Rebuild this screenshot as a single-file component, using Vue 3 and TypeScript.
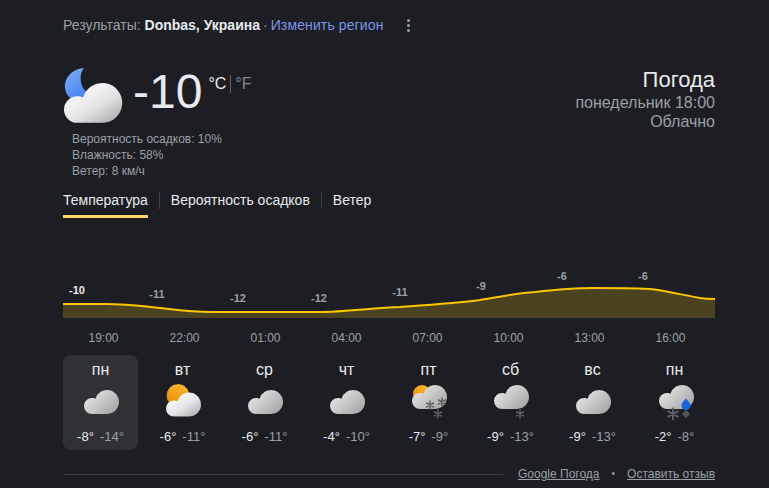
<script setup lang="ts">
type Kind = 'cloud' | 'sun' | 'sunsnow' | 'snow' | 'mix'
interface Day { name: string; hi: string; lo: string; kind: Kind }

const days: Day[] = [
  { name: 'пн', hi: '-8°', lo: '-14°', kind: 'cloud' },
  { name: 'вт', hi: '-6°', lo: '-11°', kind: 'sun' },
  { name: 'ср', hi: '-6°', lo: '-11°', kind: 'cloud' },
  { name: 'чт', hi: '-4°', lo: '-10°', kind: 'cloud' },
  { name: 'пт', hi: '-7°', lo: '-9°', kind: 'sunsnow' },
  { name: 'сб', hi: '-9°', lo: '-13°', kind: 'snow' },
  { name: 'вс', hi: '-9°', lo: '-13°', kind: 'cloud' },
  { name: 'пн', hi: '-2°', lo: '-8°', kind: 'mix' }
]
const hours = ['19:00', '22:00', '01:00', '04:00', '07:00', '10:00', '13:00', '16:00']
const labels = [
  { x: 14, y: 26, t: '-10', main: true },
  { x: 94, y: 30, t: '-11', main: false },
  { x: 175, y: 34, t: '-12', main: false },
  { x: 256, y: 34, t: '-12', main: false },
  { x: 337, y: 28, t: '-11', main: false },
  { x: 418, y: 22, t: '-9', main: false },
  { x: 499, y: 12, t: '-6', main: false },
  { x: 580, y: 12, t: '-6', main: false }
]
const curve = 'M0 36 C15 36 30 36 42 36 C62 36 78 38 97 40 C115 42 130 44 149 44 L257 44 C280 44 310 40 337 39 C365 37 395 35 417 32 C435 29 455 25 472 24 C490 22 510 20 530 20 C545 20 565 20 587 21 C605 23 620 27 637 30 C643 31 648 31 652 31'
const area = curve + ' L652 50 L0 50 Z'
</script>

<template>
  <div class="page">
    <svg class="defs" width="0" height="0" aria-hidden="true">
      <defs>
        <linearGradient id="cloudMain" x1="0.1" y1="0.1" x2="0.9" y2="1">
          <stop offset="0" stop-color="#ffffff" />
          <stop offset="0.55" stop-color="#e4e4e4" />
          <stop offset="1" stop-color="#a9a9a9" />
        </linearGradient>
        <linearGradient id="cloudGrey" x1="0.1" y1="0.3" x2="0.9" y2="0.9">
          <stop offset="0" stop-color="#e2e2e2" />
          <stop offset="1" stop-color="#a6a6a6" />
        </linearGradient>
        <linearGradient id="moonFill" x1="0.2" y1="0" x2="0.8" y2="1">
          <stop offset="0" stop-color="#7aa9f7" />
          <stop offset="1" stop-color="#3d7cf2" />
        </linearGradient>
        <linearGradient id="sunFill" x1="0.8" y1="0" x2="0.2" y2="1">
          <stop offset="0" stop-color="#fbb92d" />
          <stop offset="1" stop-color="#ee8a0a" />
        </linearGradient>
        <g id="flake" stroke="#5f6064" stroke-width="1.5" stroke-linecap="round">
          <path d="M0 -4V4M-3.5 -2L3.5 2M-3.5 2L3.5 -2" />
        </g>
      </defs>
    </svg>

    <header class="top">
      <span class="region">Результаты: <b>Donbas, Украина</b><span class="sep">·</span><a class="link">Изменить регион</a></span>
      <span class="dots"><i></i><i></i><i></i></span>
    </header>

    <section class="now">
      <div class="now-left">
        <div class="temp-row">
          <svg class="main-icon" width="60" height="56" viewBox="0 0 60 56">
            <path fill="url(#moonFill)" d="M21 1 C9 2 1 11 2 21 C3 29 8 33 14 33 L34 30 C26 28 19 23 18 15 C17 9 18 5 21 1 Z" />
            <path transform="translate(1 16) scale(1.66)" fill="url(#cloudMain)" d="M8 24 A8 8 0 0 1 8 8 C9.5 8 10.5 8.3 11.5 8.8 A12 12 0 1 1 23 24 Z" />
          </svg>
          <span class="temp">-10</span>
          <span class="units"><span class="unit-on">°C</span><span class="unit-off">°F</span></span>
        </div>
        <ul class="details">
          <li>Вероятность осадков: 10%</li>
          <li>Влажность: 58%</li>
          <li>Ветер: 8 км/ч</li>
        </ul>
      </div>
      <div class="now-right">
        <div class="title">Погода</div>
        <div class="sub">понедельник 18:00</div>
        <div class="sub">Облачно</div>
      </div>
    </section>

    <nav class="tabs">
      <span class="tab active">Температура</span>
      <span class="tab">Вероятность осадков</span>
      <span class="tab">Ветер</span>
    </nav>

    <svg class="chart" width="652" height="50" viewBox="0 0 652 50">
      <path :d="area" fill="#4b431f" />
      <path :d="curve" fill="none" stroke="#fcc500" stroke-width="2" />
      <text v-for="l in labels" :key="l.x" :x="l.x" :y="l.y" text-anchor="middle"
            :class="l.main ? 'lab lab-main' : 'lab'">{{ l.t }}</text>
    </svg>

    <div class="hours">
      <span v-for="h in hours" :key="h">{{ h }}</span>
    </div>

    <div class="days">
      <div v-for="(d, i) in days" :key="i" class="day" :class="{ selected: i === 0 }">
        <div class="day-name">{{ d.name }}</div>
        <svg class="day-icon" width="48" height="38" viewBox="0 0 48 38">
          <template v-if="d.kind === 'cloud'">
            <path transform="translate(7 8)" fill="url(#cloudGrey)" d="M8 24 A8 8 0 0 1 8 8 C9.5 8 10.5 8.3 11.5 8.8 A12 12 0 1 1 23 24 Z" />
          </template>
          <template v-else-if="d.kind === 'sun'">
            <circle cx="19" cy="13.5" r="11" fill="url(#sunFill)" stroke="url(#sunFill)" stroke-width="0.8" stroke-dasharray="4 1" />
            <path transform="translate(7 10.5)" fill="url(#cloudMain)" d="M8 24 A8 8 0 0 1 8 8 C9.5 8 10.5 8.3 11.5 8.8 A12 12 0 1 1 23 24 Z" />
          </template>
          <template v-else-if="d.kind === 'sunsnow'">
            <circle cx="17" cy="12" r="9" fill="url(#sunFill)" />
            <path transform="translate(7 3)" fill="url(#cloudGrey)" d="M8 24 A8 8 0 0 1 8 8 C9.5 8 10.5 8.3 11.5 8.8 A12 12 0 1 1 23 24 Z" />
            <use href="#flake" x="25" y="23" />
            <use href="#flake" x="37" y="20" />
            <use href="#flake" x="33" y="32" />
          </template>
          <template v-else-if="d.kind === 'snow'">
            <path transform="translate(7 3)" fill="url(#cloudGrey)" d="M8 24 A8 8 0 0 1 8 8 C9.5 8 10.5 8.3 11.5 8.8 A12 12 0 1 1 23 24 Z" />
            <use href="#flake" x="33" y="32" />
          </template>
          <template v-else>
            <path transform="translate(8 3)" fill="url(#cloudGrey)" d="M8 24 A8 8 0 0 1 8 8 C9.5 8 10.5 8.3 11.5 8.8 A12 12 0 1 1 23 24 Z" />
            <path fill="#1565e0" d="M35 16.5 C36.5 18.5 39.5 20.5 39.5 23.5 A4.5 4.5 0 0 1 30.5 23.5 C30.5 20.5 33.5 18.5 35 16.5 Z" />
            <use href="#flake" transform="translate(22 32) scale(1.35)" />
            <path fill="#55565a" d="M35 28 L39 32 L35 36 L31 32 Z" />
          </template>
        </svg>
        <div class="day-temps"><span class="hi">{{ d.hi }}</span><span class="lo">{{ d.lo }}</span></div>
      </div>
    </div>

    <footer class="foot">
      <span class="rule"></span>
      <a class="foot-link">Google Погода</a>
      <span class="bullet">•</span>
      <a class="foot-link">Оставить отзыв</a>
    </footer>
  </div>
</template>

<style>
html, body { background: #1d1e23; }
</style>

<style scoped>
.page {
  box-sizing: border-box;
  width: 769px;
  height: 488px;
  padding: 17px 54px 0 63px;
  background: #1d1e23;
  color: #e8eaed;
  font-family: "Liberation Sans", Arial, sans-serif;
  overflow: hidden;
}
.defs { position: absolute; }
.top { display: flex; align-items: center; height: 16px; font-size: 14px; line-height: 16px; color: #9aa0a6; }
.top b { color: #e8eaed; font-weight: 700; }
.sep { margin: 0 3px; }
.link { color: #7b95e8; letter-spacing: 0.12px; }
.dots { display: flex; flex-direction: column; gap: 2px; margin-left: 23px; }
.dots i { width: 3px; height: 3px; border-radius: 50%; background: #9aa0a6; }
.now { display: flex; justify-content: space-between; margin-top: 34px; }
.temp-row { display: flex; align-items: flex-start; }
.main-icon { display: block; }
.temp { margin: -1px 0 0 10px; font-size: 48px; line-height: 52px; color: #e8eaed; }
.units { display: flex; margin: 8px 0 0 6px; font-size: 16px; line-height: 18px; }
.unit-on { padding-right: 4px; border-right: 1px solid #5f6368; color: #e8eaed; }
.unit-off { padding-left: 4px; color: #80868b; }
.details { list-style: none; margin: 8px 0 0 9px; padding: 0; font-size: 12px; line-height: 16px; color: #9aa0a6; }
.now-right { text-align: right; }
.title { font-size: 22px; line-height: 26px; color: #e8eaed; }
.sub { font-size: 16px; line-height: 19px; color: #9aa0a6; }
.tabs { display: flex; margin-top: 13px; font-size: 14px; line-height: 16px; }
.tab { position: relative; padding: 0 0 10px; margin-right: 23px; color: #e8eaed; }
.tab + .tab::before {
  content: "";
  position: absolute;
  left: -12px;
  top: 0;
  height: 17px;
  width: 1px;
  background: #3c4043;
}
.active { box-shadow: inset 0 -3px 0 #fdd663; }
.chart { display: block; margin-top: 50px; overflow: visible; }
.lab { font-size: 11px; font-weight: 700; fill: #9aa0a6; font-family: "Liberation Sans", Arial, sans-serif; }
.lab-main { fill: #e8eaed; }
.hours { display: grid; width: 648px; grid-template-columns: repeat(8, 1fr); margin-top: 13px; font-size: 12px; line-height: 15px; color: #9aa0a6; text-align: center; }
.days { display: grid; grid-template-columns: repeat(8, 75px); gap: 7px; margin-top: 9px; }
.day { height: 95px; border-radius: 8px; box-sizing: border-box; padding-top: 5px; text-align: center; }
.selected { background: #303134; }
.day-name { font-size: 16px; line-height: 19px; color: #e8eaed; }
.day-icon { display: block; margin: 3px auto 0; }
.day-temps { display: flex; justify-content: center; gap: 6px; margin-top: 9px; font-size: 13px; line-height: 16px; }
.hi { color: #e8eaed; }
.lo { color: #9aa0a6; }
.foot { display: flex; align-items: center; margin-top: 16px; font-size: 12px; line-height: 16px; color: #9aa0a6; }
.rule { flex: 1; height: 1px; background: #3c4043; margin-right: 15px; }
.foot-link { text-decoration: underline; }
.bullet { margin: 0 12px; font-size: 10px; }
</style>
